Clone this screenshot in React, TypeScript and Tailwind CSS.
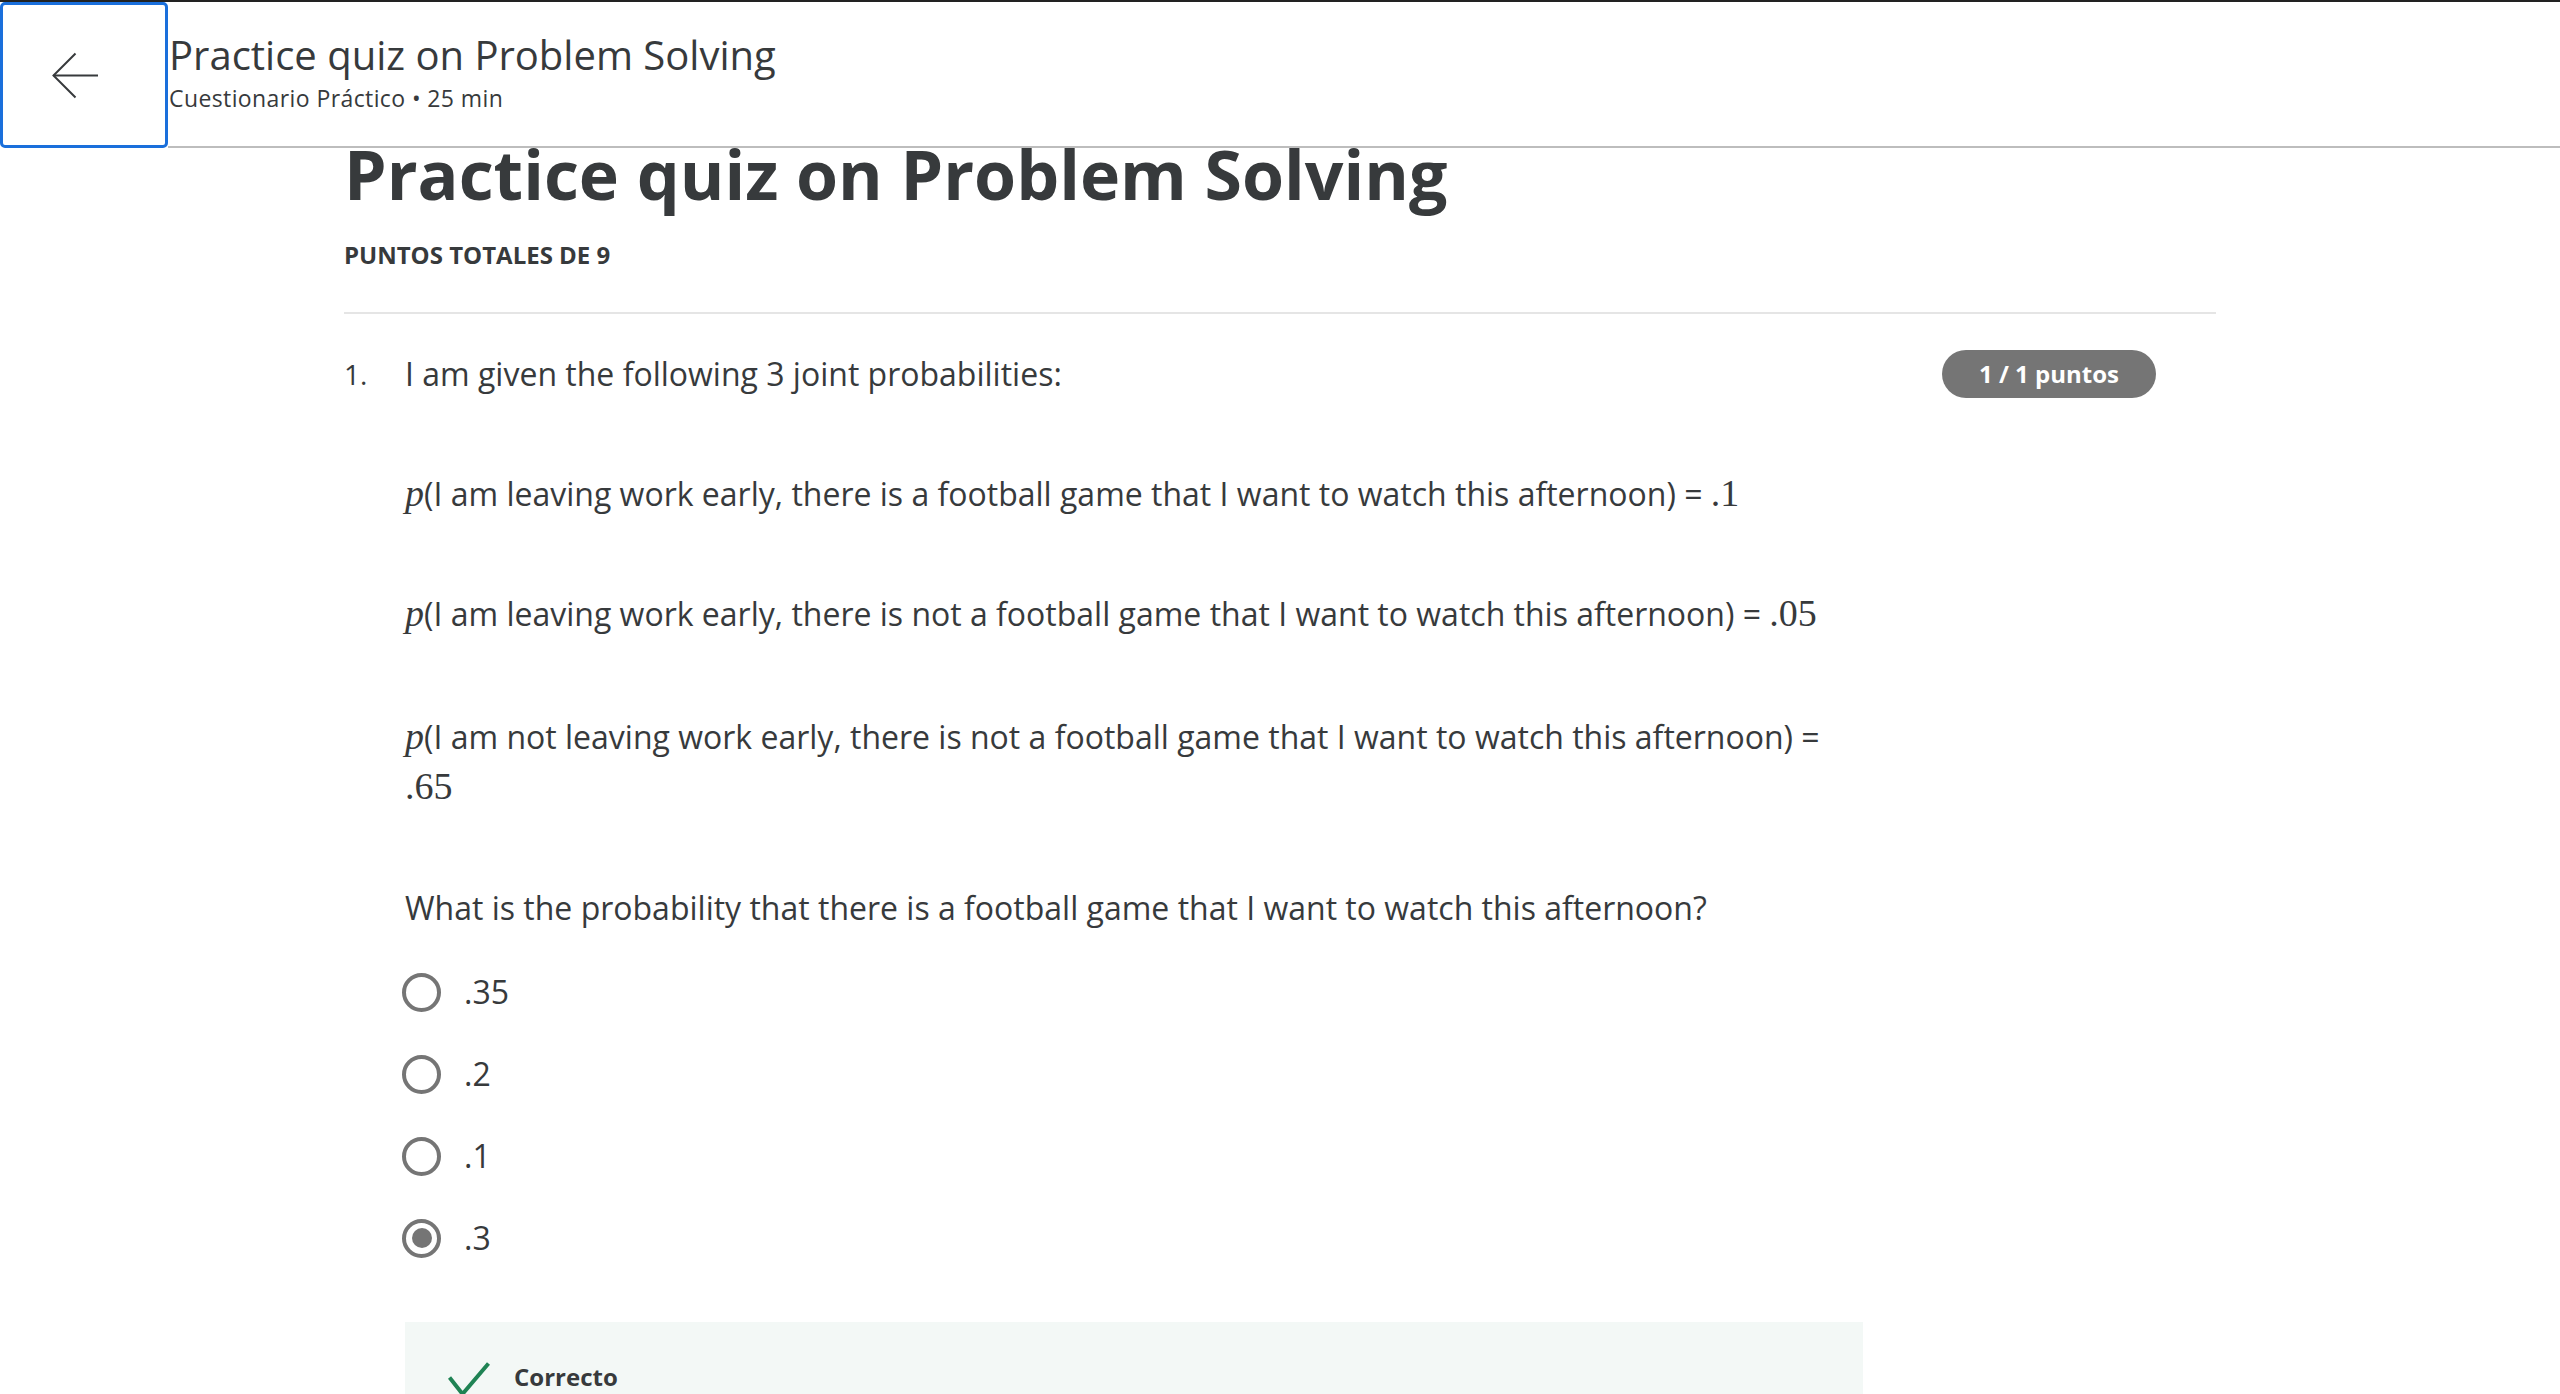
import React from 'react'

const options = ['.35', '.2', '.1', '.3']
const selected = 3

const Math = ({ children, italic }: { children: React.ReactNode; italic?: boolean }) => (
  <span
    className={`font-['Liberation_Serif',serif] text-[38px] leading-none ${italic ? 'italic' : ''}`}
  >
    {children}
  </span>
)

const App: React.FC = () => {
  return (
    <div className="min-h-screen bg-white font-['Open_Sans',sans-serif] text-[#373a3c]">
      <div className="h-[2px] bg-[#222]" />

      {/* Top bar */}
      <header className="flex h-[146px]">
        <button className="flex h-[146px] w-[168px] shrink-0 items-center justify-center rounded-[5px] border-[3px] border-[#1a6fdb] bg-white pr-[18px]">
          <svg width="47" height="47" viewBox="0 0 47 47" fill="none" stroke="#373a3c" strokeWidth="2">
            <path d="M46 23.5H1.5" />
            <path d="M23.5 1.5L1.5 23.5L23.5 45.5" />
          </svg>
        </button>
        <div className="flex-1 border-b-2 border-[#bdbdbd] pl-[1px] pt-[27px]">
          <div className="text-[40px] leading-[52px]">Practice quiz on Problem Solving</div>
          <div className="mt-[2px] text-[23px] leading-[30px] tracking-[0.4px]">Cuestionario Práctico • 25 min</div>
        </div>
      </header>

      <main className="mx-auto w-[1872px]">
        <h1 className="text-[68px] font-bold leading-[52px]">Practice quiz on Problem Solving</h1>
        <div className="mt-[39px] text-[24px] font-bold uppercase leading-[32px]">Puntos totales de 9</div>
        <div className="mt-[41px] h-[2px] bg-[#e5e5e5]" />

        {/* Question 1 */}
        <div className="mt-[36px] flex">
          <div className="w-[61px] shrink-0 pt-[2px] text-[28px] leading-[44px]">1.</div>
          <div className="w-[1458px] shrink-0">
            <p className="text-[32px] leading-[48px]">I am given the following 3 joint probabilities:</p>
            <p className="mt-[72px] text-[32px] leading-[48px]">
              <Math italic>p</Math>(I am leaving work early, there is a football game that I want to watch this
              afternoon) = <Math>.1</Math>
            </p>
            <p className="mt-[72px] text-[32px] leading-[48px]">
              <Math italic>p</Math>(I am leaving work early, there is not a football game that I want to watch this
              afternoon) = <Math>.05</Math>
            </p>
            <p className="mt-[74px] text-[32px] leading-[50px]">
              <Math italic>p</Math>(I am not leaving work early, there is not a football game that I want to watch
              this afternoon) = <Math>.65</Math>
            </p>
            <p className="mt-[72px] text-[32px] leading-[48px]">
              What is the probability that there is a football game that I want to watch this afternoon?
            </p>

            <div className="mt-[36px] flex flex-col gap-[34px]">
              {options.map((opt, i) => (
                <label key={opt} className="flex h-[48px] items-center gap-[23px]">
                  <span className="-ml-[3px] flex h-[39px] w-[39px] items-center justify-center rounded-full border-4 border-[#757575]">
                    {i === selected && <span className="h-[20px] w-[20px] rounded-full bg-[#757575]" />}
                  </span>
                  <span className="text-[32px] leading-[48px]">{opt}</span>
                </label>
              ))}
            </div>

            <div className="mt-[60px] bg-[#f3f8f6] pb-[40px] pl-[43px] pt-[39px]">
              <div className="flex items-start gap-[24px]">
                <svg width="42" height="34" viewBox="0 0 42 34" fill="none" className="mt-[1px]">
                  <path d="M1.5 15.5L14.5 32L40.5 1.5" stroke="#1f8354" strokeWidth="4" />
                </svg>
                <span className="text-[24px] font-bold leading-[32px]">Correcto</span>
              </div>
            </div>
          </div>
          <div className="ml-auto mr-[60px]">
            <span className="flex h-[48px] items-center rounded-full bg-[#757575] px-[37px] text-[24px] font-bold text-white">
              1 / 1 puntos
            </span>
          </div>
        </div>
      </main>
    </div>
  )
}

export default App
